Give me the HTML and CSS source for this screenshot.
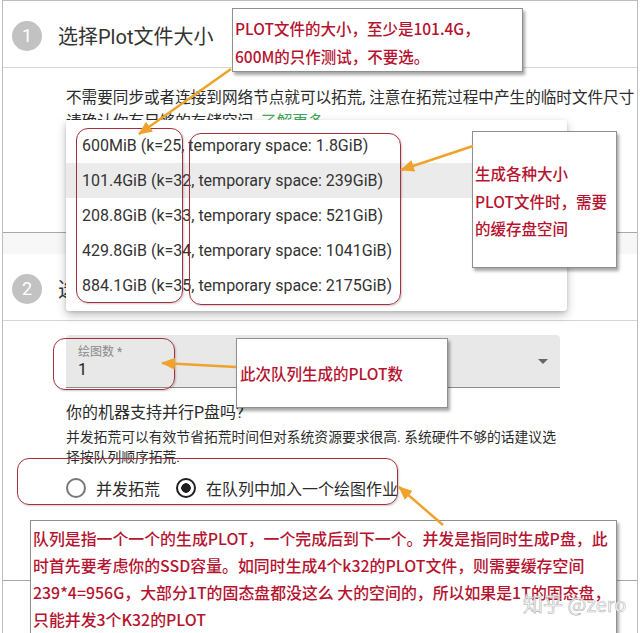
FILE: index.html
```html
<!DOCTYPE html>
<html lang="zh-CN">
<head>
  <meta charset="UTF-8" />
  <title>创建绘图</title>
  <link rel="stylesheet" href="styles.css">
</head>
<body>
  <div class="frame">
    <section class="step">
      <div class="step-head">
        <span class="step-num">1</span>
        <h2>选择Plot文件大小</h2>
      </div>
      <div class="step-body step-body-size">
        <p class="note">不需要同步或者连接到网络节点就可以拓荒, 注意在拓荒过程中产生的临时文件尺寸<br>请确认你有足够的存储空间. <a href="#">了解更多</a></p>
      </div>
    </section>

    <div class="step-gap"></div>

    <section class="step">
      <div class="step-head">
        <span class="step-num">2</span>
        <h2>选择绘图数量</h2>
      </div>
      <div class="step-body">
        <div class="select-field">
          <div class="select-text">
            <span class="select-label">绘图数 *</span>
            <span class="select-value">1</span>
          </div>
          <span class="select-arrow"></span>
        </div>
        <p class="question">你的机器支持并行P盘吗?</p>
        <p class="hint">并发拓荒可以有效节省拓荒时间但对系统资源要求很高. 系统硬件不够的话建议选择按队列顺序拓荒.</p>
        <div class="radio-row">
          <label class="radio"><span class="radio-dot"></span>并发拓荒</label>
          <label class="radio checked"><span class="radio-dot"></span>在队列中加入一个绘图作业</label>
        </div>
      </div>
    </section>
  </div>

  <!-- open plot size menu -->
  <ul class="menu">
    <li>600MiB (k=25, temporary space: 1.8GiB)</li>
    <li class="active">101.4GiB (k=32, temporary space: 239GiB)</li>
    <li>208.8GiB (k=33, temporary space: 521GiB)</li>
    <li>429.8GiB (k=34, temporary space: 1041GiB)</li>
    <li>884.1GiB (k=35, temporary space: 2175GiB)</li>
  </ul>

  <!-- hand drawn markers -->
  <div class="ring ring-size"></div>
  <div class="ring ring-temp"></div>
  <div class="ring ring-count"></div>
  <div class="ring ring-mode"></div>

  <div class="callout callout-size">PLOT文件的大小，至少是101.4G，<br>600M的只作测试，不要选。</div>
  <div class="callout callout-temp">生成各种大小<br>PLOT文件时，需要<br>的缓存盘空间</div>
  <div class="callout callout-count">此次队列生成的PLOT数</div>
  <div class="callout callout-mode">队列是指一个一个的生成PLOT，一个完成后到下一个。并发是指同时生成P盘，此<br>时首先要考虑你的SSD容量。如同时生成4个k32的PLOT文件，则需要缓存空间<br>239*4=956G，大部分1T的固态盘都没这么 大的空间的，所以如果是1T的固态盘，<br>只能并发3个K32的PLOT</div>

  <svg class="arrows" width="640" height="633" viewBox="0 0 640 633">
    <defs>
      <marker id="head" markerUnits="userSpaceOnUse" markerWidth="14" markerHeight="12" refX="13" refY="6" orient="auto">
        <path d="M0,0 L14,6 L0,12 z" fill="#efa22c" />
      </marker>
    </defs>
    <line x1="231" y1="69" x2="139" y2="134" />
    <line x1="473" y1="146" x2="401" y2="170" />
    <line x1="236" y1="367" x2="162" y2="363" />
    <line x1="443" y1="525" x2="399" y2="487" />
  </svg>

  <div class="watermark">知乎 @zero</div>
</body>
</html>
```

FILE: styles.css
```css
body {
  margin: 0;
  width: 640px;
  height: 633px;
  overflow: hidden;
  position: relative;
  background: #fff;
  color: #2b2b2b;
  font-family: Roboto, "Noto Sans CJK SC", sans-serif;
}

.frame {
  margin-left: 2px;
  width: 636px;
  height: 633px;
  box-sizing: border-box;
  border: 1px solid #bdbdbd;
  border-bottom: none;
  overflow: hidden;
}

/* step cards */
.step-head {
  display: flex;
  align-items: center;
  gap: 16px;
  height: 67px;
  box-sizing: border-box;
  padding: 3px 0 0 9px;
  border-bottom: 1px solid #d6d6d6;
}

.step-num {
  width: 30px;
  height: 30px;
  border-radius: 50%;
  background: #c2c2c2;
  color: #fff;
  font-size: 18px;
  display: flex;
  align-items: center;
  justify-content: center;
}

h2 {
  margin: 0;
  font-size: 20px;
  font-weight: 400;
  color: #333;
}

.step-body {
  padding: 14px 0 80px 63px;
  border-bottom: 1px solid #a8a8a8;
}

.step-body-size {
  height: 165px;
  box-sizing: border-box;
  padding: 18px 0 0 63px;
}

.step-gap {
  height: 21px;
  background: #f7f7f7;
}

.note {
  margin: 0;
  font-size: 15.6px;
  line-height: 24px;
  white-space: nowrap;
}

.note a {
  color: #3ea65a;
  text-decoration: none;
}

/* plot count select */
.select-field {
  width: 494px;
  height: 53px;
  box-sizing: border-box;
  padding: 0 12px;
  display: flex;
  align-items: center;
  background: #e8e8e8;
  border-bottom: 1px solid #8c8c8c;
  border-radius: 4px 4px 0 0;
}

.select-text {
  align-self: flex-start;
  padding-top: 10px;
  display: flex;
  flex-direction: column;
}

.select-label {
  font-size: 12px;
  line-height: 15px;
  color: #8a8a8a;
}

.select-value {
  font-size: 16px;
  line-height: 20px;
  color: #222;
}

.select-arrow {
  margin-left: auto;
  width: 0;
  height: 0;
  border-left: 5px solid transparent;
  border-right: 5px solid transparent;
  border-top: 5px solid #666;
}

.question {
  margin: 14px 0 0;
  font-size: 16px;
  line-height: 22px;
}

.hint {
  margin: 3px 0 0;
  width: 494px;
  font-size: 13.8px;
  line-height: 20px;
}

.radio-row {
  margin-top: 9px;
  height: 24px;
  display: flex;
  align-items: center;
  gap: 16px;
  font-size: 16px;
}

.radio {
  display: flex;
  align-items: center;
  gap: 10px;
}

.radio-dot {
  width: 20px;
  height: 20px;
  box-sizing: border-box;
  border: 2px solid #777;
  border-radius: 50%;
}

.radio.checked .radio-dot {
  border-color: #1f1f1f;
  background: radial-gradient(circle, #1f1f1f 0 4.5px, transparent 5px);
}

/* dropdown menu */
.menu {
  position: absolute;
  left: 66px;
  top: 120px;
  width: 501px;
  margin: 0;
  padding: 8px 0;
  list-style: none;
  background: #fff;
  border-radius: 3px;
  box-shadow: 0 4px 10px rgba(0, 0, 0, 0.25), 0 1px 3px rgba(0, 0, 0, 0.12);
}

.menu li {
  height: 35px;
  line-height: 35px;
  padding-left: 16px;
  font-size: 16px;
  color: #333;
}

.menu li.active {
  background: #ebebeb;
}

/* red rounded outlines */
.ring {
  position: absolute;
  box-sizing: border-box;
  border: 1.5px solid #a3303e;
  border-radius: 12px;
  box-shadow: 1px 1px 2px rgba(0, 0, 0, 0.2);
}

.ring-size { left: 76px; top: 128px; width: 107px; height: 175px; }
.ring-temp { left: 189px; top: 133px; width: 212px; height: 172px; }
.ring-count { left: 53px; top: 338px; width: 122px; height: 52px; }
.ring-mode { left: 17px; top: 458px; width: 381px; height: 47px; }

/* note boxes */
.callout {
  position: absolute;
  box-sizing: border-box;
  background: #fff;
  border: 1px solid #8f8f8f;
  box-shadow: 2px 3px 3px rgba(0, 0, 0, 0.35);
  color: #b5132f;
  font-family: "Noto Sans CJK SC", sans-serif;
  font-weight: 500;
  font-size: 15.5px;
  line-height: 28px;
  padding-left: 2px;
  white-space: nowrap;
}

.callout-size { left: 232px; top: 8px; width: 291px; height: 64px; padding-top: 5px; }
.callout-temp { left: 472px; top: 131px; width: 145px; height: 137px; padding-top: 28px; line-height: 27.5px; }
.callout-count { left: 236px; top: 338px; width: 212px; height: 70px; padding-top: 20px; padding-left: 3px; }

.callout-mode {
  left: 30px;
  top: 520px;
  width: 587px;
  height: 130px;
  padding-top: 4px;
  font-size: 15.9px;
  line-height: 27px;
}

.arrows {
  position: absolute;
  left: 0;
  top: 0;
  pointer-events: none;
}

.arrows line {
  stroke: #efa22c;
  stroke-width: 2.5;
  marker-end: url(#head);
}

.watermark {
  position: absolute;
  left: 523px;
  top: 589px;
  font-family: "Noto Sans CJK SC", sans-serif;
  font-size: 20px;
  color: rgba(255, 255, 255, 0.92);
  -webkit-text-stroke: 0.6px #b4b4b4;
}
```
